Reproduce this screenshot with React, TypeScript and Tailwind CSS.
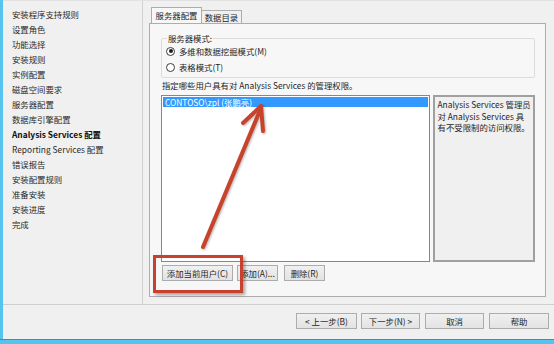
import React from 'react';

const navItems = [
  '安装程序支持规则',
  '设置角色',
  '功能选择',
  '安装规则',
  '实例配置',
  '磁盘空间要求',
  '服务器配置',
  '数据库引擎配置',
  'Analysis Services 配置',
  'Reporting Services 配置',
  '错误报告',
  '安装配置规则',
  '准备安装',
  '安装进度',
  '完成',
];

function Radio({ checked, label }: { checked?: boolean; label: string }) {
  return (
    <div className="flex items-center h-[16px]">
      <span className="w-[9px] h-[9px] rounded-full border border-[#3c3c3c] bg-white flex items-center justify-center">
        {checked && <span className="w-[4px] h-[4px] rounded-full bg-[#1e1e1e]" />}
      </span>
      <span className="ml-[4px]">{label}</span>
    </div>
  );
}

function Btn({ children, className = '' }: { children: React.ReactNode; className?: string }) {
  return (
    <div
      className={`h-[16px] flex items-center justify-center border border-[#acacac] bg-gradient-to-b from-[#f0f0f0] to-[#e3e3e3] text-[#1e1e1e] ${className}`}
    >
      {children}
    </div>
  );
}

export default function App() {
  return (
    <div
      className="relative w-[554px] h-[344px] bg-[#56c4ee] overflow-hidden text-[8.4px] leading-[11px] text-[#1e1e1e]"
      style={{ fontFamily: "'Noto Sans CJK SC', 'Noto Sans', sans-serif" }}
    >
      <div className="ml-[3px] h-[339px] bg-[#f0f0f0] border-t border-[#e2e2e2] flex flex-col">
        {/* top section */}
        <div className="flex h-[304px] border-b border-[#cfcfcf]">
          <div className="w-[140px] border-r border-[#d2d2d2] pl-[9px] pt-[6px] text-[#2a2a2a]">
            {navItems.map((t) => (
              <div
                key={t}
                className={`h-[15px] leading-[15px] ${t === 'Analysis Services 配置' ? 'font-bold text-[#111]' : ''}`}
              >
                {t}
              </div>
            ))}
          </div>

          <div className="flex-1 pl-[6px] pt-[7px]">
            {/* tabs */}
            <div className="flex items-end ml-[2px] h-[15px]">
              <div className="relative z-10 h-[16px] w-[51px] border border-b-0 border-[#adadad] bg-[#f7f7f7] flex items-center justify-center">
                服务器配置
              </div>
              <div className="h-[13px] w-[40px] border border-l-0 border-b-0 border-[#adadad] bg-[#f0f0f0] flex items-center justify-center">
                数据目录
              </div>
            </div>
            {/* tab panel */}
            <div className="w-[397px] h-[274px] border border-[#adadad] bg-[#f7f7f7] pl-[11px] pr-[10px]">
              <fieldset className="mt-[9px] border border-[#dcdcdc] rounded-[2px] h-[45px] pl-[4px]">
                <legend className="ml-[1px] px-[1px]">服务器模式:</legend>
                <div className="-mt-[1px]">
                  <Radio checked label="多维和数据挖掘模式(M)" />
                  <Radio label="表格模式(T)" />
                </div>
              </fieldset>
              <div className="mt-[2px] h-[11px] ml-[1px]">指定哪些用户具有对 Analysis Services 的管理权限。</div>
              <div className="flex mt-[4px] gap-[3px]">
                <div className="w-[270px] h-[167px] border border-[#828790] bg-white p-[1px]">
                  <div className="h-[10px] leading-[10px] bg-[#3399ff] text-white pl-[2px]">CONTOSO\zpl (张鹏亮)</div>
                </div>
                <div className="w-[103px] h-[167px] border-2 border-[#a0a0a0] bg-[#f0f0f0] pl-[3px] pr-[1px] pt-[2px] leading-[11.5px]">
                  Analysis Services 管理员 对 Analysis Services 具有不受限制的访问权限。
                </div>
              </div>
              <div className="flex mt-[3px] ml-[1px]">
                <Btn className="w-[71px]">添加当前用户(C)</Btn>
                <Btn className="w-[41px] ml-[4px]">添加(A)...</Btn>
                <Btn className="w-[41px] ml-[6px]">删除(R)</Btn>
              </div>
            </div>
          </div>
        </div>

        {/* bottom bar */}
        <div className="flex justify-end gap-[4px] pt-[8px] pr-[5px]">
          <Btn className="w-[61px]">&lt; 上一步(B)</Btn>
          <Btn className="w-[59px]">下一步(N) &gt;</Btn>
          <Btn className="w-[59px] ml-[1px]">取消</Btn>
          <Btn className="w-[60px] ml-[1px]">帮助</Btn>
        </div>
      </div>
      <div className="h-[5px] border-t border-[#3e8fb8]" />

      {/* annotation: red box */}
      <div className="absolute left-[153px] top-[255px] w-[90px] h-[38px] border-[3px] border-[#c8412d] shadow-[2px_2px_3px_rgba(0,0,0,0.35)]" />

      {/* annotation: red arrow */}
      <svg className="absolute left-0 top-0" width="554" height="344" viewBox="0 0 554 344">
        <g
          stroke="#c8432c"
          strokeWidth="4"
          strokeLinecap="round"
          strokeLinejoin="round"
          fill="none"
          style={{ filter: 'drop-shadow(1px 1px 1px rgba(0,0,0,0.3))' }}
        >
          <path d="M203 247 L261 108" />
          <path d="M243 123 L261 106 L263 131" />
        </g>
      </svg>
    </div>
  );
}
